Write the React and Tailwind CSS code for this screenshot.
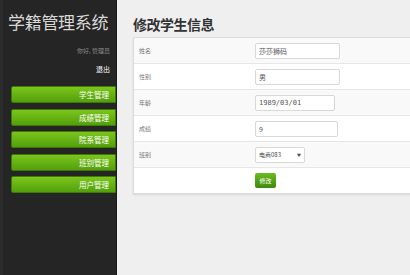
export default function App() {
  const menu = ["学生管理", "成绩管理", "院系管理", "班别管理", "用户管理"];
  const rows = [
    { label: "姓名", value: "莎莎狮码", w: "w-[85px]", bg: "bg-[#f9f9f9]" },
    { label: "性别", value: "男", w: "w-[85px]", bg: "bg-white" },
    { label: "年龄", value: "1989/03/01", w: "w-[80px]", bg: "bg-[#f9f9f9]", mono: true },
    { label: "成绩", value: "9", w: "w-[83px]", bg: "bg-white" },
  ];
  return (
    <div className="flex w-[410px] h-[275px] overflow-hidden bg-[#efefef] font-['Noto_Sans_CJK_SC',sans-serif]">
      <div className="w-[117px] shrink-0 h-full bg-[#252525] border-l-[3px] border-[#2c2c2c] border-r border-r-[#1a1a1a] flex flex-col">
        <div className="pl-[5px] pt-[9px] text-[17px] leading-[26px] text-[#d8d8d8] tracking-[-0.3px]">学籍管理系统</div>
        <div className="text-right pr-[6px] mt-[12px] text-[6px] leading-[8px] text-[#8a8a8a]">你好, 管理员</div>
        <div className="text-right pr-[6px] mt-[10px] text-[7px] leading-[8px] text-white">退出</div>
        <div className="flex flex-col gap-[5.5px] mt-[13px] pl-[8px]">
          {menu.map((m) => (
            <div key={m} className="h-[17px] rounded-l-[2px] bg-gradient-to-b from-[#7cc51c] to-[#52a00a] border border-[#3f7a08] text-right pr-[6px] text-[7.5px] leading-[15px] text-white">
              {m}
            </div>
          ))}
        </div>
      </div>
      <div className="flex-1 flex flex-col pl-[16px]">
        <div className="pt-[14px] h-[37px] text-[14px] leading-[20px] font-bold text-[#333] tracking-[-0.5px]">修改学生信息</div>
        <div className="border border-[#dcdcdc] bg-white shadow-[0_1px_2px_rgba(0,0,0,0.1)] w-[300px]">
          {rows.map((r) => (
            <div key={r.label} className={`flex items-center h-[26px] border-b border-[#e6e6e6] ${r.bg}`}>
              <div className="w-[121px] pl-[5px] text-[6px] text-[#777]">{r.label}</div>
              <div className={`${r.w} h-[16px] bg-white border border-[#d8d8d8] rounded-[2px] pl-[3px] text-[7px] leading-[14px] text-[#555] ${r.mono ? "font-['DejaVu_Sans_Mono',monospace] text-[6px]" : ""}`}>{r.value}</div>
            </div>
          ))}
          <div className="flex items-center h-[26px] border-b border-[#e6e6e6] bg-[#f9f9f9]">
            <div className="w-[121px] pl-[5px] text-[6px] text-[#777]">班别</div>
            <div className="w-[50px] h-[16px] bg-white border border-[#d8d8d8] rounded-[2px] pl-[3px] pr-[3px] flex items-center justify-between text-[6px] text-[#444]">
              <span>电商083</span>
              <span className="text-[4px]">▼</span>
            </div>
          </div>
          <div className="flex items-center h-[25px] bg-white">
            <div className="w-[121px]"></div>
            <div className="w-[21px] h-[15px] rounded-[2px] bg-gradient-to-b from-[#6dbb22] to-[#3f8a0c] text-white text-[6px] leading-[15px] text-center">修改</div>
          </div>
        </div>
      </div>
    </div>
  );
}
